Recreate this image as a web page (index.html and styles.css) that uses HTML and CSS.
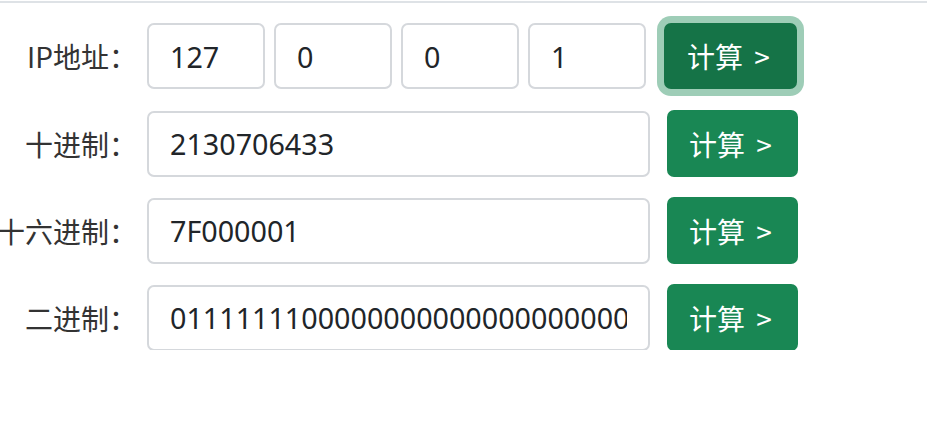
FILE: index.html
```html
<!DOCTYPE html>
<html lang="zh">
<head>
<meta charset="utf-8">
<title>IP地址转换</title>
<link rel="stylesheet" href="styles.css">
</head>
<body>
<div class="topline"></div>
<form class="conv">
  <div class="row">
    <label class="lbl">IP地址：</label>
    <div class="field quad">
      <input class="ctl" value="127">
      <input class="ctl" value="0">
      <input class="ctl" value="0">
      <input class="ctl" value="1">
    </div>
    <button type="button" class="btn focus">计算 &gt;</button>
  </div>
  <div class="row">
    <label class="lbl">十进制：</label>
    <div class="field"><input class="ctl" value="2130706433"></div>
    <button type="button" class="btn">计算 &gt;</button>
  </div>
  <div class="row">
    <label class="lbl">十六进制：</label>
    <div class="field"><input class="ctl" value="7F000001"></div>
    <button type="button" class="btn">计算 &gt;</button>
  </div>
  <div class="row">
    <label class="lbl">二进制：</label>
    <div class="field"><input class="ctl" value="01111111000000000000000000000001"></div>
    <button type="button" class="btn">计算 &gt;</button>
  </div>
</form>
</body>
</html>
```
FILE: styles.css
```css
html, body {
  margin: 0;
  padding: 0;
  background: #fff;
  font-family: "Open Sans", "Noto Sans", "Noto Sans CJK SC", sans-serif;
  color: #212529;
}
.topline {
  margin-top: 1px;
  border-top: 2px solid #dee2e6;
}
.conv {
  display: flex;
  flex-direction: column;
  gap: 21px;
  padding-top: 20px;
}
.row {
  display: grid;
  grid-template-columns: 137px 503px auto;
  column-gap: 10px;
  align-items: center;
  height: 66px;
}
.lbl {
  text-align: right;
  white-space: nowrap;
  font-family: "Noto Sans CJK SC", sans-serif;
  font-size: 28px;
  color: #333;
  justify-self: end;
}
.field {
  display: flex;
  gap: 9px;
  height: 66px;
}
.ctl {
  box-sizing: border-box;
  width: 100%;
  min-width: 0;
  height: 66px;
  padding: 0 21px;
  border: 2px solid #d5d8dc;
  border-radius: 7px;
  font-family: "Noto Sans", "Noto Sans CJK SC", sans-serif;
  font-size: 28.7px;
  color: #212529;
  background: #fff;
  outline: none;
}
.quad .ctl {
  width: 118px;
  flex: none;
}
.btn {
  box-sizing: border-box;
  justify-self: start;
  margin-left: 7px;
  height: 67px;
  width: 131px;
  padding: 0 4px 0 0;
  border: none;
  border-radius: 7px;
  background: #198754;
  color: #fff;
  font-family: "Noto Sans CJK SC", sans-serif;
  font-size: 28px;
  word-spacing: 5px;
  cursor: pointer;
}
.btn.focus {
  margin-left: 4px;
  width: 133px;
  height: 66px;
  background: #157347;
  box-shadow: 0 0 0 7px rgba(25, 135, 84, 0.42);
}
```
